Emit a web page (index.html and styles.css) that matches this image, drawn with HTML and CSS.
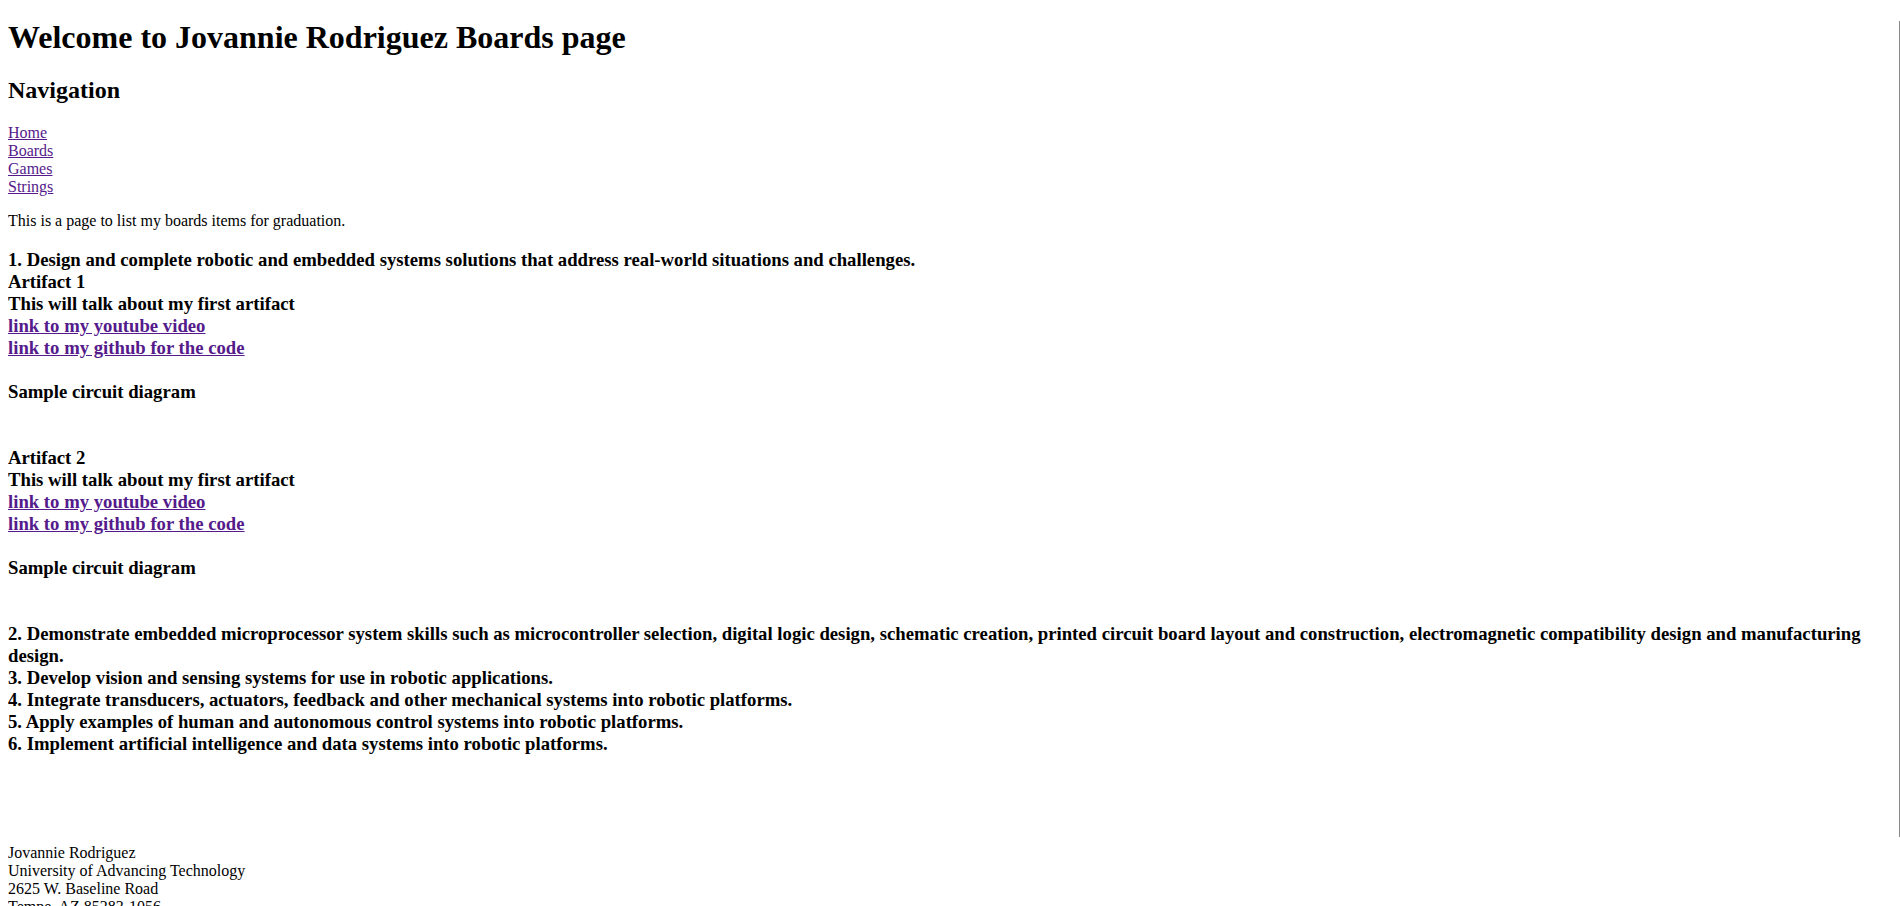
FILE: index.html
```html
<!DOCTYPE html>
<html lang="en">
<head>
<meta charset="utf-8">
<title>Boards</title>
<link rel="stylesheet" href="styles.css">
</head>
<body class="page">
<h1 class="title">Welcome to Jovannie Rodriguez Boards page</h1>
<h2 class="nav-title">Navigation</h2>
<nav class="nav">
<a class="link" href="#">Home</a><br>
<a class="link" href="#">Boards</a><br>
<a class="link" href="#">Games</a><br>
<a class="link" href="#">Strings</a>
</nav>
<p class="intro">This is a page to list my boards items for graduation.</p>
<h3 class="outcomes">1. Design and complete robotic and embedded systems solutions that address real-world situations and challenges.<br>
Artifact 1<br>
This will talk about my first artifact<br>
<a class="link" href="#">link to my youtube video</a><br>
<a class="link" href="#">link to my github for the code</a><br>
<br>
Sample circuit diagram<br>
<br>
<br>
Artifact 2<br>
This will talk about my first artifact<br>
<a class="link" href="#">link to my youtube video</a><br>
<a class="link" href="#">link to my github for the code</a><br>
<br>
Sample circuit diagram<br>
<br>
<br>
2. Demonstrate embedded microprocessor system skills such as microcontroller selection, digital logic design, schematic creation, printed circuit board layout and construction, electromagnetic compatibility design and manufacturing design.<br>
3. Develop vision and sensing systems for use in robotic applications.<br>
4. Integrate transducers, actuators, feedback and other mechanical systems into robotic platforms.<br>
5. Apply examples of human and autonomous control systems into robotic platforms.<br>
6. Implement artificial intelligence and data systems into robotic platforms.</h3>
<footer class="footer">
<div class="spacer"></div>
Jovannie Rodriguez<br>
University of Advancing Technology<br>
2625 W. Baseline Road<br>
Tempe, AZ 85283-1056
</footer>
<div class="scroll-edge"></div>
</body>
</html>
```
FILE: styles.css
```css
html, body {
  background: #ffffff;
}
.page {
  margin: 8px;
  font-family: "Liberation Serif", "Times New Roman", serif;
  font-size: 16px;
  color: #000000;
}
.title {
  font-size: 32px;
  font-weight: bold;
  margin: 11px 0 21.44px;
}
.nav-title {
  font-size: 24px;
  font-weight: bold;
  margin: 19.92px 0;
}
.nav {
  display: block;
}
.link {
  color: #551a8b;
  text-decoration: underline;
}
.intro {
  margin: 16px 0;
}
.outcomes {
  font-size: 18.72px;
  font-weight: bold;
  margin: 18.72px 0;
}
.footer {
  display: block;
}
.spacer {
  height: 70px;
}
.scroll-edge {
  position: fixed;
  right: 0;
  top: 21px;
  width: 1px;
  height: 816px;
  background: #8a8a8a;
}
```
